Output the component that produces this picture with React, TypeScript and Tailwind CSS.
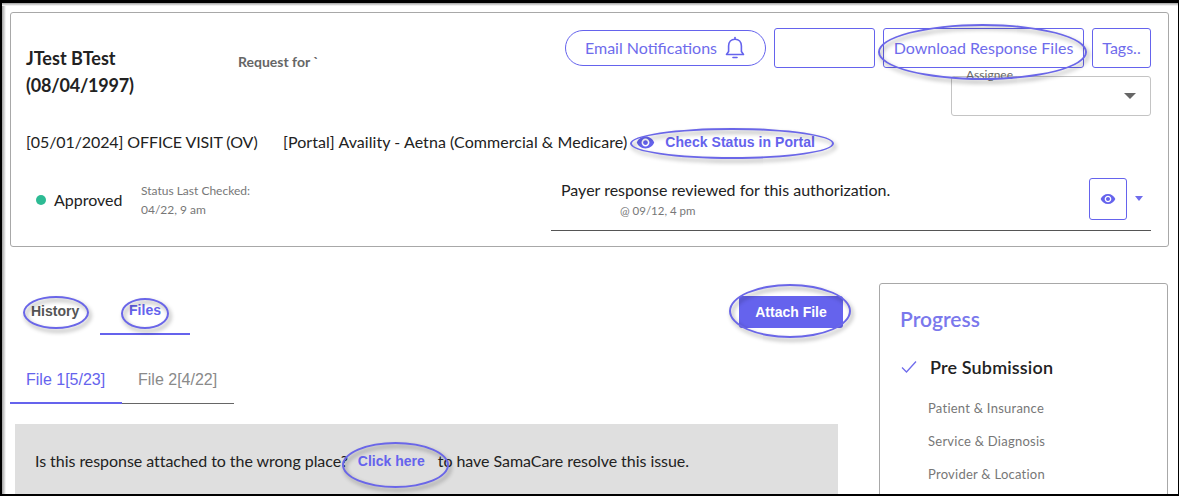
import React from "react";

const lato = "font-['Lato','Noto_Sans',sans-serif]";
const arial = "font-['Liberation_Sans',Arial,sans-serif]";

function Ring({ className }: { className: string }) {
  return (
    <div
      className={
        "absolute rounded-[50%] border-2 border-[#6a66e8] drop-shadow-[2px_3px_2px_rgba(0,0,0,0.4)] pointer-events-none " +
        className
      }
    />
  );
}

function Eye({ size }: { size: number }) {
  return (
    <svg width={size} height={size} viewBox="0 0 24 24" fill="#6563ed" className="shrink-0">
      <path d="M12 4.5C7 4.5 2.73 7.61 1 12c1.73 4.39 6 7.5 11 7.5s9.27-3.11 11-7.5c-1.73-4.39-6-7.5-11-7.5zM12 17c-2.76 0-5-2.24-5-5s2.24-5 5-5 5 2.24 5 5-2.24 5-5 5zm0-8c-1.66 0-3 1.34-3 3s1.34 3 3 3 3-1.34 3-3-1.34-3-3-3z" />
    </svg>
  );
}

function Bell() {
  return (
    <svg width="22" height="24" viewBox="0 0 22 24" fill="none" stroke="#6563ed" strokeWidth="1.6" strokeLinejoin="round" strokeLinecap="round">
      <path d="M2.5 18.5 L4.6 15.5 V10 C4.6 6 7.2 3.2 11 3.2 S17.4 6 17.4 10 V15.5 L19.5 18.5 Z" />
      <path d="M9 21.5 H13" />
      <path d="M11 1.5 V3" />
    </svg>
  );
}

const outlineBtn =
  "flex items-center justify-center border border-[#6563ed] rounded-[3px] text-[#6f6cec] text-[16px] bg-white";

export default function App() {
  return (
    <div
      className={
        "relative w-[1179px] h-[496px] overflow-hidden bg-white text-[#222] box-border border-t-[3px] border-l-2 border-r border-b-2 border-black " +
        lato
      }
    >
      <div className="absolute inset-y-0 left-0 w-[4px] bg-linear-to-r from-[#a0a0a0] to-white" />
      <div className="absolute top-0 inset-x-0 h-[3px] bg-linear-to-b from-[#a0a0a0] to-white" />

      <div className="ml-[8px] mr-[9px] mt-[9px] h-[235px] border border-[#a8a8a8] rounded-[3px] pl-[15px] pr-[17px] pt-[15px]">
        {/* top row */}
        <div className="flex justify-between h-[88px]">
          <div className="flex items-start">
            <div className="w-[212px] pt-[17px] text-[18px] leading-[27px] font-bold text-[#222]">
              JTest BTest
              <br />
              <span className="tracking-[-0.2px]">(08/04/1997)</span>
            </div>
            <div className="pt-[25px] text-[14px] leading-[18px] font-bold text-[#666]">Request for `</div>
          </div>
          <div className="flex flex-col items-end">
            <div className="flex items-center gap-[8px]">
              <div className={outlineBtn + " w-[201px] h-[36px] rounded-[18px] gap-[7px]"}>
                Email Notifications
                <Bell />
              </div>
              <div className={outlineBtn + " w-[101px] h-[40px]"} />
              <div className={outlineBtn + " w-[201px] h-[40px]"}>Download Response Files</div>
              <div className={outlineBtn + " w-[59px] h-[40px]"}>Tags..</div>
            </div>
            <div className="relative mt-[8px] w-[200px] h-[40px] border border-[#c4c4c4] rounded-[3px] flex items-center justify-end pr-[14px]">
              <span className="absolute -top-[9px] left-[14px] text-[12px] leading-[14px] text-[#666]">Assignee</span>
              <span className="w-0 h-0 border-x-[6px] border-x-transparent border-t-[6px] border-t-[#666]" />
            </div>
          </div>
        </div>

        {/* portal row */}
        <div className="mt-[16px] flex items-center h-[20px] text-[16px] leading-[20px] text-[#222]">
          <span className="w-[257px] tracking-[-0.1px]">[05/01/2024] OFFICE VISIT (OV)</span>
          <span className="tracking-[0.06px]">[Portal] Availity - Aetna (Commercial &amp; Medicare)</span>
          <span className="ml-[9px] flex items-center gap-[10px]">
            <Eye size={19} />
            <span className={"text-[#6563ed] text-[14px] font-bold tracking-[0.05px] " + arial}>Check Status in Portal</span>
          </span>
        </div>

        {/* status row */}
        <div className="mt-[26px] flex h-[52px]">
          <div className="w-[525px] flex pt-[3px]">
            <div className="w-[115px] pl-[10px] pt-[5px] flex items-center h-[32px] gap-[8px] text-[16px]">
              <span className="w-[10px] h-[10px] rounded-full bg-[#2dbb94]" />
              Approved
            </div>
            <div className="text-[12px] leading-[19px] text-[#777]">
              Status Last Checked:
              <br />
              04/22, 9 am
            </div>
          </div>
          <div className="w-[600px] border-b border-[#555] flex justify-between h-[53px]">
            <div className="pl-[10px]">
              <div className="text-[16px] leading-[24px] text-[#222]">Payer response reviewed for this authorization.</div>
              <div className="pl-[59px] pt-[1px] text-[11.5px] leading-[16px] text-[#777]">@ 09/12, 4 pm</div>
            </div>
            <div className="flex items-start gap-[8px] pr-[8px]">
              <div className="w-[38px] h-[42px] border border-[#6563ed] rounded-[3px] flex items-center justify-center">
                <Eye size={16} />
              </div>
              <span className="mt-[18px] w-0 h-0 border-x-[4px] border-x-transparent border-t-[5px] border-t-[#6f6cec]" />
            </div>
          </div>
        </div>
      </div>

      {/* lower */}
      <div className="ml-[8px] mr-[10px] mt-[36px] flex justify-between items-start">
        <div className="w-[828px]">
          <div className="flex items-start justify-between h-[52px]">
            <div className={"flex h-[52px] items-start text-[14px] font-bold " + arial}>
              <div className="w-[90px] pl-[21px] pt-[20px] leading-[16px] text-[#555]">History</div>
              <div className="w-[90px] h-[52px] border-b-2 border-[#6563ed] text-center pt-[19px] leading-[16px] text-[#6563ed]">Files</div>
            </div>
            <div className={"mt-[13px] -mr-[5px] w-[104px] h-[32px] rounded-[3px] bg-[#6563ed] text-white text-[14px] font-bold flex items-center justify-center " + arial}>
              Attach File
            </div>
          </div>

          <div className={"mt-[17px] flex text-[16px] " + arial}>
            <div className="w-[112px] h-[52px] border-b-2 border-[#6563ed] text-[#6563ed] pl-[16px] pt-[18px] leading-[20px]">File 1[5/23]</div>
            <div className="w-[112px] h-[52px] border-b border-[#666] text-[#8a8a8a] pl-[16px] pt-[18px] leading-[20px]">File 2[4/22]</div>
          </div>

          <div className="ml-[5px] mt-[20px] h-[80px] bg-[#dfdfdf] pl-[20px] pt-[27px] flex items-start text-[16px] leading-[20px] text-[#222] tracking-[-0.05px]">
            <span>Is this response attached to the wrong place?</span>
            <span className={"ml-[10px] mr-[13px] text-[14px] font-bold tracking-normal text-[#6563ed] " + arial}>Click here</span>
            <span>to have SamaCare resolve this issue.</span>
          </div>
        </div>

        <div className="w-[289px] h-[240px] border border-[#a8a8a8] rounded-[3px] pl-[20px] pt-[21px]">
          <div className="text-[21px] leading-[28px] font-semibold text-[#7a78ec]">Progress</div>
          <div className="mt-[22px] flex items-center h-[24px]">
            <svg width="18" height="14" viewBox="0 0 18 14" fill="none" stroke="#6f6cec" strokeWidth="1.3" className="shrink-0">
              <path d="M2 7.5 L6.5 12 L16 1.5" />
            </svg>
            <span className="ml-[12px] text-[18px] tracking-[0.15px] font-semibold text-[#222]">Pre Submission</span>
          </div>
          <div className="pl-[28px] text-[13px] leading-[33px] text-[#777] tracking-[0.25px] mt-[13px]">
            <div>Patient &amp; Insurance</div>
            <div>Service &amp; Diagnosis</div>
            <div>Provider &amp; Location</div>
          </div>
        </div>
      </div>

      <Ring className="left-[876px] top-[21px] w-[209px] h-[56px]" />
      <Ring className="left-[628px] top-[125px] w-[204px] h-[31px]" />
      <Ring className="left-[21px] top-[293px] w-[66px] h-[33px]" />
      <Ring className="left-[119px] top-[295px] w-[48px] h-[31px]" />
      <Ring className="left-[727px] top-[281px] w-[122px] h-[54px]" />
      <Ring className="left-[340px] top-[439px] w-[107px] h-[46px]" />
    </div>
  );
}
